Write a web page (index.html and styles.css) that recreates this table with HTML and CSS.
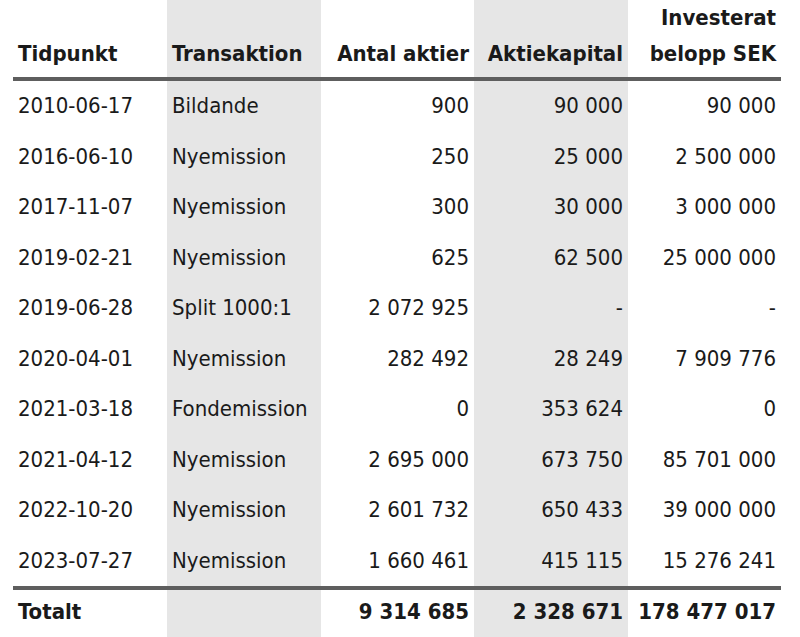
FILE: index.html
```html
<!DOCTYPE html>
<html lang="sv">
<head>
<meta charset="utf-8">
<title>Aktiekapitalets utveckling</title>
<link rel="stylesheet" href="styles.css">
</head>
<body>
<table class="cap-table">
  <colgroup>
    <col class="c1"><col class="c2 shade"><col class="c3"><col class="c4 shade"><col class="c5">
  </colgroup>
  <thead>
    <tr>
      <th class="left">Tidpunkt</th>
      <th class="left">Transaktion</th>
      <th class="right">Antal aktier</th>
      <th class="right">Aktiekapital</th>
      <th class="right">Investerat<br>belopp SEK</th>
    </tr>
  </thead>
  <tbody>
    <tr><td>2010-06-17</td><td>Bildande</td><td class="right">900</td><td class="right">90 000</td><td class="right">90 000</td></tr>
    <tr><td>2016-06-10</td><td>Nyemission</td><td class="right">250</td><td class="right">25 000</td><td class="right">2 500 000</td></tr>
    <tr><td>2017-11-07</td><td>Nyemission</td><td class="right">300</td><td class="right">30 000</td><td class="right">3 000 000</td></tr>
    <tr><td>2019-02-21</td><td>Nyemission</td><td class="right">625</td><td class="right">62 500</td><td class="right">25 000 000</td></tr>
    <tr><td>2019-06-28</td><td>Split 1000:1</td><td class="right">2 072 925</td><td class="right">-</td><td class="right">-</td></tr>
    <tr><td>2020-04-01</td><td>Nyemission</td><td class="right">282 492</td><td class="right">28 249</td><td class="right">7 909 776</td></tr>
    <tr><td>2021-03-18</td><td>Fondemission</td><td class="right">0</td><td class="right">353 624</td><td class="right">0</td></tr>
    <tr><td>2021-04-12</td><td>Nyemission</td><td class="right">2 695 000</td><td class="right">673 750</td><td class="right">85 701 000</td></tr>
    <tr><td>2022-10-20</td><td>Nyemission</td><td class="right">2 601 732</td><td class="right">650 433</td><td class="right">39 000 000</td></tr>
    <tr><td>2023-07-27</td><td>Nyemission</td><td class="right">1 660 461</td><td class="right">415 115</td><td class="right">15 276 241</td></tr>
  </tbody>
  <tfoot>
    <tr><td>Totalt</td><td></td><td class="right">9 314 685</td><td class="right">2 328 671</td><td class="right">178 477 017</td></tr>
  </tfoot>
</table>
</body>
</html>
```

FILE: styles.css
```css
html, body {
  margin: 0;
  padding: 0;
  background: #ffffff;
}

body {
  font-family: "DejaVu Sans Condensed", "DejaVu Sans", sans-serif;
  font-stretch: condensed;
  font-size: 22px;
  color: #1a1a1a;
}

.cap-table {
  margin-left: 13px;
  width: 768px;
  border-collapse: collapse;
  table-layout: fixed;
}

.c1 { width: 154px; }
.c2 { width: 154px; }
.c3 { width: 153px; }
.c4 { width: 154px; }
.c5 { width: 153px; }

.shade {
  background: #e6e6e6;
}

.cap-table th,
.cap-table td {
  padding: 8px 5px;
  line-height: 34.5px;
  white-space: nowrap;
  text-align: left;
}

.cap-table th {
  font-weight: bold;
  vertical-align: bottom;
  line-height: 36px;
  padding-top: 0;
  padding-bottom: 5px;
}

.cap-table thead tr {
  border-bottom: 4px solid #5e5e5e;
}

.cap-table tfoot tr {
  border-top: 4px solid #5e5e5e;
}

.cap-table tfoot td {
  font-weight: bold;
  padding-top: 5px;
  padding-bottom: 20px;
}

.cap-table .right {
  text-align: right;
}
```
